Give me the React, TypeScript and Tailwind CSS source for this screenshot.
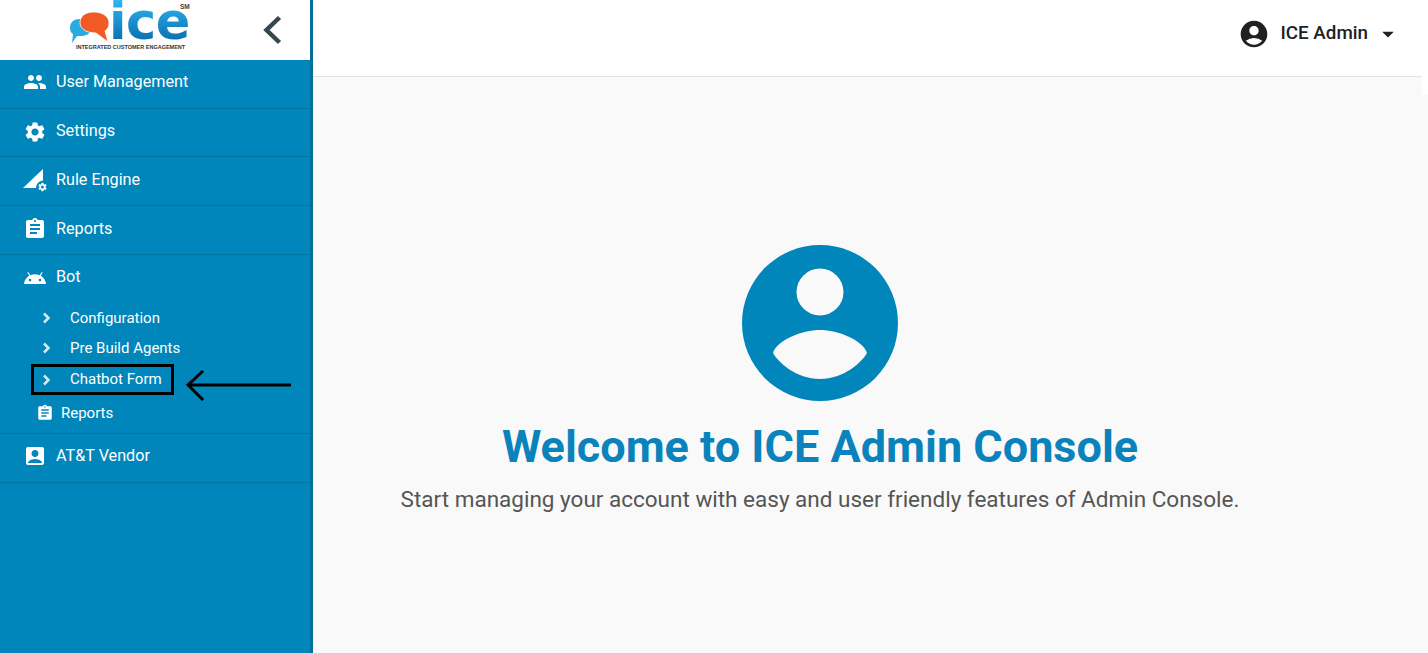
import {
  MdPeople,
  MdSettings,
  MdAssignment,
  MdAccountBox,
  MdAccountCircle,
  MdArrowDropDown,
} from "react-icons/md";
import type { ReactNode } from "react";

function Logo() {
  return (
    <div className="relative w-[122px] h-[54px] ml-[69px] self-start">
      <svg viewBox="0 0 42 34" className="absolute left-0 top-[11px] w-[42px] h-[34px]" aria-hidden="true">
        <path d="M1 17c0-6 4-9 10-9s11 3 11 9-5 8-10 8H8l-5 7 1-9c-2-1-3-3-3-6Z" fill="#29abe2" />
        <path d="M11 12C11 5 16 1 25 1c8 0 15 4 15 11 0 3-1 6-4 8l3 11-12-9c-9 0-16-4-16-10Z" fill="#f15a22" stroke="#fff" strokeWidth=".8" />
      </svg>
      <span className="absolute left-[40px] top-0 font-['DejaVu_Sans'] text-[51px] leading-[43px] font-bold tracking-[-0.5px] text-transparent bg-clip-text bg-gradient-to-b from-[#2db7f2] to-[#0a6cab]">
        ice
      </span>
      <span className="absolute left-[111px] top-[3px] font-['Liberation_Sans'] text-[6.5px] leading-[7px] font-bold text-[#444]">
        SM
      </span>
      <span className="absolute left-[7px] top-[44px] whitespace-nowrap font-['Liberation_Sans'] text-[5.5px] leading-[7px] font-bold text-[#333]">
        INTEGRATED CUSTOMER ENGAGEMENT
      </span>
    </div>
  );
}

function RuleIcon() {
  return (
    <svg viewBox="0 0 24 24" className="w-6 h-6" fill="currentColor" aria-hidden="true">
      <path d="M0 20 20 1v11.5a7.5 7.5 0 0 0-7 7.5Z" />
      <g transform="translate(13 13) scale(.5)">
        <path d="M19.14 12.94a7 7 0 0 0 0-1.88l2.03-1.58-1.92-3.32-2.39.96a7 7 0 0 0-1.62-.94L14.88 3.6h-3.84l-.36 2.58a7 7 0 0 0-1.62.94l-2.39-.96-1.92 3.32 2.03 1.58a7 7 0 0 0 0 1.88l-2.03 1.58 1.92 3.32 2.39-.96a7 7 0 0 0 1.62.94l.36 2.58h3.84l.36-2.58a7 7 0 0 0 1.62-.94l2.39.96 1.92-3.32ZM12.96 15a3 3 0 1 1 0-6 3 3 0 0 1 0 6Z" />
      </g>
    </svg>
  );
}

function BotIcon() {
  return (
    <svg viewBox="0 0 24 24" className="w-6 h-6" fill="currentColor" aria-hidden="true">
      <path d="M1 19c.3-3.6 2.2-6.5 5.2-8.2L4.3 7.6l1-.6 2 3.3a11.6 11.6 0 0 1 9.4 0l2-3.3 1 .6-1.9 3.2c3 1.7 4.9 4.6 5.2 8.2Zm6-2.6a1.3 1.3 0 1 0 0-2.6 1.3 1.3 0 0 0 0 2.6Zm10 0a1.3 1.3 0 1 0 0-2.6 1.3 1.3 0 0 0 0 2.6Z" />
    </svg>
  );
}

function NavRow({ icon, label, className }: { icon: ReactNode; label: string; className: string }) {
  return (
    <div className={`flex items-center shrink-0 pl-[23px] border-b border-[#00739f] text-white text-[16.2px] ${className}`}>
      <span className="w-6 h-6 mr-[9px] flex items-center justify-center">{icon}</span>
      {label}
    </div>
  );
}

function SubRow({ label, className }: { label: string; className: string }) {
  return (
    <div className={`flex items-center text-white text-[15px] ${className}`}>
      <svg viewBox="0 0 20 20" className="w-5 h-5 ml-[36px] mr-[14px]" fill="none" stroke="#d5eaf3" strokeWidth="2.5" aria-hidden="true">
        <path d="M8 5.5 12.5 10 8 14.5" />
      </svg>
      {label}
    </div>
  );
}

export default function App() {
  return (
    <div className="flex w-[1428px] h-[653px] overflow-hidden bg-[#f9f9f9] font-['Roboto',sans-serif]">
      <aside className="w-[313px] shrink-0 flex flex-col bg-[#0086ba] border-r-[3px] border-[#006f99]">
        <div className="h-[60px] shrink-0 bg-white flex items-center justify-between">
          <Logo />
          <svg viewBox="0 0 20 30" className="w-5 h-[30px] mr-[28px]" fill="none" stroke="#37474f" strokeWidth="4.5" aria-hidden="true">
            <path d="M17.5 3.5 4.5 16 17.5 28.5" transform="translate(0 -1)" />
          </svg>
        </div>
        <NavRow icon={<MdPeople className="w-6 h-6" />} label="User Management" className="h-[49px] pb-[4px]" />
        <NavRow icon={<MdSettings className="w-6 h-6" />} label="Settings" className="h-[48px] pb-[2px]" />
        <NavRow icon={<RuleIcon />} label="Rule Engine" className="h-[49px] pb-[2px]" />
        <NavRow icon={<MdAssignment className="w-6 h-6" />} label="Reports" className="h-[49px] pb-[2px]" />
        <div className="h-[179px] shrink-0 border-b border-[#00739f] flex flex-col">
          <div className="flex items-center h-[44px] pl-[23px] text-white text-[16.2px]">
            <span className="w-6 h-6 mr-[9px] flex items-center justify-center"><BotIcon /></span>
            Bot
          </div>
          <SubRow label="Configuration" className="h-[30px] mt-[4px]" />
          <SubRow label="Pre Build Agents" className="h-[30px]" />
          <div className="relative mt-px">
            <SubRow label="Chatbot Form" className="h-[31px]" />
            <div className="absolute left-[31px] top-0 w-[143px] h-[31px] border-[3px] border-black" />
            <svg viewBox="0 0 106 32" className="absolute left-[186px] top-[6px] w-[106px] h-[32px]" fill="none" stroke="black" strokeWidth="3" aria-hidden="true">
              <path d="M105 15H3M17 1 2 15l15 15" />
            </svg>
          </div>
          <div className="flex items-center h-[36px] pl-[36px] text-white text-[15px]">
            <MdAssignment className="w-[18px] h-[18px] mr-[7px]" />
            Reports
          </div>
        </div>
        <NavRow icon={<MdAccountBox className="w-6 h-6" />} label="AT&T Vendor" className="h-[49px] pb-[4px]" />
      </aside>
      <div className="flex-1 flex flex-col min-w-0">
        <header className="relative h-[77px] shrink-0 bg-white border-b border-[#e2e2e2] flex items-center justify-end">
          <MdAccountCircle className="w-[32px] h-[32px] text-[#212121] mr-[11px] -mt-[8px]" />
          <span className="text-[18.8px] font-medium text-[#212121] -mt-[10px]">ICE Admin</span>
          <MdArrowDropDown className="w-[28px] h-[28px] text-[#212121] ml-[6px] mr-[26px] -mt-[8px]" />
          <div className="absolute right-0 top-0 w-[6px] h-[95px] bg-white" />
        </header>
        <main className="flex-1 flex flex-col items-center pt-[168px] pr-[101px]">
          <svg viewBox="0 0 156 156" className="w-[156px] h-[156px] shrink-0" aria-hidden="true">
            <path
              fillRule="evenodd"
              fill="#0086ba"
              d="M78 0a78 78 0 1 0 0 156A78 78 0 0 0 78 0Zm0 23.5a23.5 23.5 0 1 1 0 47 23.5 23.5 0 0 1 0-47Zm0 61.5c18 0 43 10 47 23-5 9-23 26-47 26s-42-17-47-26c4-13 29-23 47-23Z"
            />
          </svg>
          <h1 className="mt-[16px] text-[45px] leading-[60px] font-bold text-[#0a82bb] whitespace-nowrap">Welcome to ICE Admin Console</h1>
          <p className="mt-[6px] text-[22.5px] leading-[32px] text-[#555] whitespace-nowrap">
            Start managing your account with easy and user friendly features of Admin Console.
          </p>
        </main>
      </div>
    </div>
  );
}
